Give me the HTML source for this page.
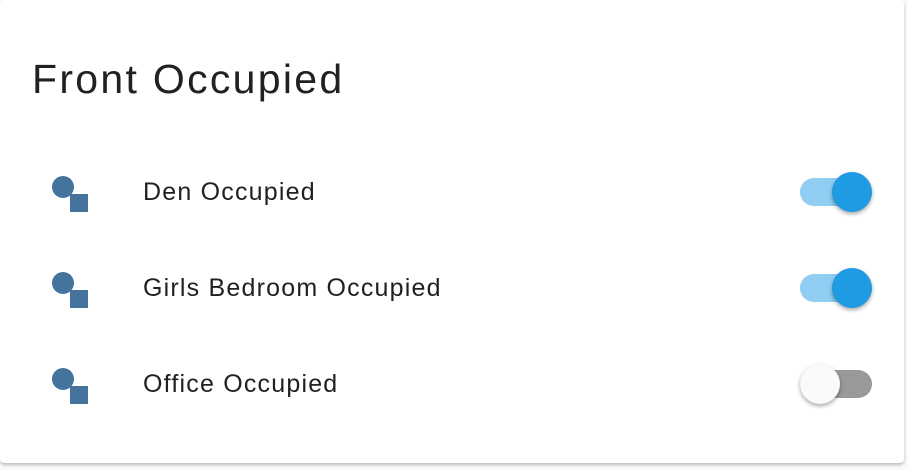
<html><head><style>
body{margin:0;width:908px;height:470px;background:#fafafa;overflow:hidden;font-family:"Liberation Sans",Roboto,sans-serif;}
.card{position:absolute;left:0;top:0;width:904px;height:463px;background:#fff;border-radius:4px;box-shadow:0 2px 3px rgba(0,0,0,.25);}
.t{position:absolute;left:32px;top:56px;font-size:41px;color:#212121;letter-spacing:2.3px;}
.c{position:absolute;left:52px;width:22px;height:22px;border-radius:50%;background:#44739e;}
.s{position:absolute;left:70px;width:18px;height:18px;background:#44739e;}
.l{position:absolute;left:143px;font-size:25px;color:#212121;letter-spacing:1.2px;}
.tr{position:absolute;left:800px;width:72px;height:28px;border-radius:14px;}
.th{position:absolute;width:40px;height:40px;border-radius:50%;box-shadow:0 2px 4px rgba(0,0,0,.35);}
</style></head><body><div class="card">
<div class="t">Front Occupied</div>
<div class="c" style="top:176px"></div><div class="s" style="top:194px"></div>
<div class="l" style="top:178px">Den Occupied</div>
<div class="tr" style="top:178px;background:#8fcdf2"></div><div class="th" style="left:832px;top:172px;background:#1e9be2"></div>
<div class="c" style="top:272px"></div><div class="s" style="top:290px"></div>
<div class="l" style="top:274px">Girls Bedroom Occupied</div>
<div class="tr" style="top:274px;background:#8fcdf2"></div><div class="th" style="left:832px;top:268px;background:#1e9be2"></div>
<div class="c" style="top:368px"></div><div class="s" style="top:386px"></div>
<div class="l" style="top:370px">Office Occupied</div>
<div class="tr" style="top:370px;background:#999"></div><div class="th" style="left:800px;top:364px;background:#fafafa"></div>
</div></body></html>
